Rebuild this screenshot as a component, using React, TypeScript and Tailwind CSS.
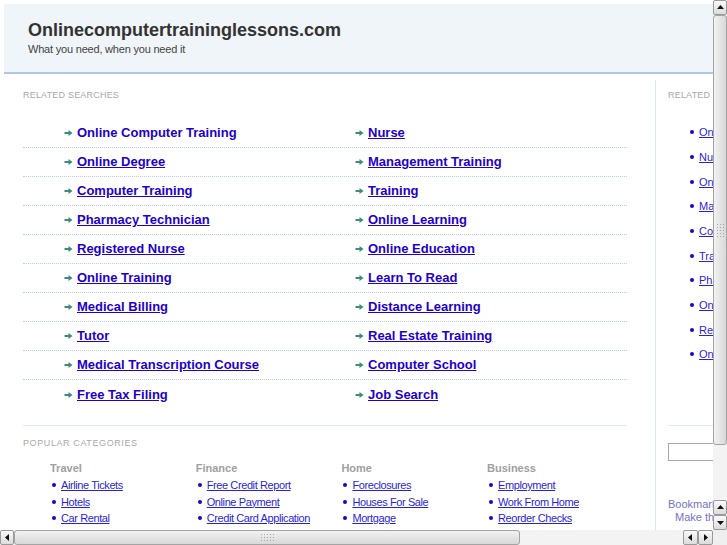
import React from "react";

const left = [
  "Online Computer Training",
  "Online Degree",
  "Computer Training",
  "Pharmacy Technician",
  "Registered Nurse",
  "Online Training",
  "Medical Billing",
  "Tutor",
  "Medical Transcription Course",
  "Free Tax Filing",
];
const right = [
  "Nurse",
  "Management Training",
  "Training",
  "Online Learning",
  "Online Education",
  "Learn To Read",
  "Distance Learning",
  "Real Estate Training",
  "Computer School",
  "Job Search",
];
const side = [
  "Online Computer Training",
  "Nurse",
  "Online Degree",
  "Management Training",
  "Computer Training",
  "Training",
  "Pharmacy Technician",
  "Online Learning",
  "Registered Nurse",
  "Online Education",
];
const cats: { title: string; items: string[] }[] = [
  { title: "Travel", items: ["Airline Tickets", "Hotels", "Car Rental"] },
  { title: "Finance", items: ["Free Credit Report", "Online Payment", "Credit Card Application"] },
  { title: "Home", items: ["Foreclosures", "Houses For Sale", "Mortgage"] },
  { title: "Business", items: ["Employment", "Work From Home", "Reorder Checks"] },
];

function Arrow() {
  return (
    <svg width="9" height="8" viewBox="0 0 9 8" className="mr-[4px] shrink-0">
      <path d="M0.5 3.1h4V1L8.5 4 4.5 7V4.9h-4z" fill="#3d8b7d" />
    </svg>
  );
}

function Tri({ dir }: { dir: "up" | "down" | "left" | "right" }) {
  const d =
    dir === "up"
      ? "M1 6L4.5 2 8 6z"
      : dir === "down"
      ? "M1 3l3.5 4L8 3z"
      : dir === "left"
      ? "M6 1L2 4.5 6 8z"
      : "M3 1l4 3.5L3 8z";
  return (
    <svg width="9" height="9" viewBox="0 0 9 9">
      <path d={d} fill="#111" />
    </svg>
  );
}

function Btn({ dir, className = "" }: { dir: "up" | "down" | "left" | "right"; className?: string }) {
  return (
    <div
      className={
        "flex items-center justify-center rounded-[2px] border border-[#9a9a9a] bg-gradient-to-b from-[#fafafa] to-[#dcdcdc] " +
        className
      }
    >
      <Tri dir={dir} />
    </div>
  );
}

function Grip({ vertical }: { vertical: boolean }) {
  const dots = Array.from({ length: 15 });
  return (
    <div className={vertical ? "grid grid-cols-3 gap-[2px]" : "grid grid-cols-5 gap-[2px]"}>
      {dots.map((_, i) => (
        <div key={i} className="w-[1px] h-[1px] bg-[#a8a8a8]" />
      ))}
    </div>
  );
}

export default function App() {
  return (
    <div
      className="w-[727px] h-[545px] overflow-hidden flex flex-col bg-white"
      style={{ fontFamily: '"Liberation Sans", Arial, sans-serif' }}
    >
      <div className="flex h-[530px]">
        <div className="w-[713px] h-[530px] overflow-hidden">
          <div className="w-[1000px] pt-[4px] pl-[4px]">
            {/* header */}
            <div className="h-[70px] bg-[#eff5f8] border-b-2 border-[#aec6ea] pl-[24px] pt-[14px]">
              <div className="text-[18px] leading-[24px] font-bold text-[#333]">
                Onlinecomputertraininglessons.com
              </div>
              <div className="text-[11px] leading-[14px] text-[#444] tracking-[-0.2px]">
                What you need, when you need it
              </div>
            </div>

            {/* main */}
            <div className="flex mt-[6px]">
              <div className="w-[652px] shrink-0 border-r border-[#dbe5f4] pl-[19px] h-[460px]">
                <div className="pt-[9px] text-[9px] leading-[12px] text-[#a8a8a8] tracking-[0.2px]">
                  RELATED SEARCHES
                </div>
                <div className="mt-[18px] w-[604px]">
                  {left.map((l, i) => (
                    <div
                      key={l}
                      className={
                        "flex h-[29px] items-center " +
                        (i < left.length - 1 ? "border-b border-dotted border-[#b7cde9]" : "")
                      }
                    >
                      <div className="w-[332px] shrink-0 pl-[41px] flex items-center">
                        <Arrow />
                        <a
                          href="#"
                          className={
                            "text-[13px] font-bold text-[#2200cc] leading-[16px] " +
                            (i === 0 ? "no-underline" : "underline")
                          }
                        >
                          {l}
                        </a>
                      </div>
                      <div className="flex-1 flex items-center">
                        <Arrow />
                        <a href="#" className="text-[13px] font-bold text-[#2200cc] leading-[16px] underline">
                          {right[i]}
                        </a>
                      </div>
                    </div>
                  ))}
                </div>

                <div className="mt-[16px] w-[604px] border-t border-[#e0e9f5] pt-[11px]">
                  <div className="text-[9px] leading-[12px] text-[#a8a8a8] tracking-[0.6px]">
                    POPULAR CATEGORIES
                  </div>
                  <div className="mt-[12px] flex pl-[27px]">
                    {cats.map((c) => (
                      <div key={c.title} className="w-[145.7px] shrink-0">
                        <div className="text-[11px] leading-[14px] font-bold text-[#a0a0a0]">{c.title}</div>
                        <ul className="mt-[2px]">
                          {c.items.map((it) => (
                            <li key={it} className="flex items-center h-[16.5px] pl-[2px]">
                              <span className="w-[4px] h-[4px] rounded-full bg-[#2200cc] mr-[5px] shrink-0" />
                              <a
                                href="#"
                                className="text-[11px] leading-[14px] text-[#2a1fdc] underline tracking-[-0.4px] whitespace-nowrap"
                              >
                                {it}
                              </a>
                            </li>
                          ))}
                        </ul>
                      </div>
                    ))}
                  </div>
                </div>
              </div>

              {/* right column */}
              <div className="w-[260px] shrink-0 pl-[12px]">
                <div className="pt-[9px] text-[9px] leading-[12px] text-[#a8a8a8] tracking-[0.2px]">
                  RELATED SEARCHES
                </div>
                <ul className="mt-[19px] pl-[22px]">
                  {side.map((s) => (
                    <li key={s} className="flex items-center h-[24.67px]">
                      <span className="w-[4px] h-[4px] rounded-full bg-[#2200cc] mr-[5px] shrink-0" />
                      <a href="#" className="text-[11px] leading-[14px] text-[#2a1fdc] underline whitespace-nowrap">
                        {s}
                      </a>
                    </li>
                  ))}
                </ul>
                <div className="mt-[58px] border-t border-[#e0e9f5] pt-[17px]">
                  <div className="w-[180px] h-[18px] border border-[#a8a8a8] bg-white" />
                </div>
                <div className="mt-[37px] text-[11px] leading-[13px] text-[#7373cc]">
                  <div>Bookmark this page</div>
                  <div className="pl-[7px]">Make this your homepage</div>
                </div>
              </div>
            </div>
          </div>
        </div>

        {/* vertical scrollbar */}
        <div className="w-[14px] h-[530px] flex flex-col bg-[#efefef]">
          <Btn dir="up" className="h-[15px] w-[14px]" />
          <div className="h-[430px] w-[14px] rounded-[3px] border border-[#a4a4a4] bg-gradient-to-r from-[#f2f2f2] to-[#d8d8d8] flex items-center justify-center">
            <Grip vertical={true} />
          </div>
          <div className="flex-1 bg-[#f3f3f3]" />
          <Btn dir="up" className="h-[15px] w-[14px]" />
          <Btn dir="down" className="h-[15px] w-[14px]" />
        </div>
      </div>

      {/* horizontal scrollbar */}
      <div className="flex h-[15px]">
        <div className="w-[713px] flex bg-[#f3f3f3]">
          <Btn dir="left" className="w-[14px] h-[15px]" />
          <div className="w-[506px] h-[15px] rounded-[3px] border border-[#a4a4a4] bg-gradient-to-b from-[#f2f2f2] to-[#d8d8d8] flex items-center justify-center">
            <Grip vertical={false} />
          </div>
          <div className="flex-1" />
          <Btn dir="left" className="w-[15px] h-[15px]" />
          <Btn dir="right" className="w-[15px] h-[15px]" />
        </div>
        <div className="w-[14px] bg-[#efefef]" />
      </div>
    </div>
  );
}
